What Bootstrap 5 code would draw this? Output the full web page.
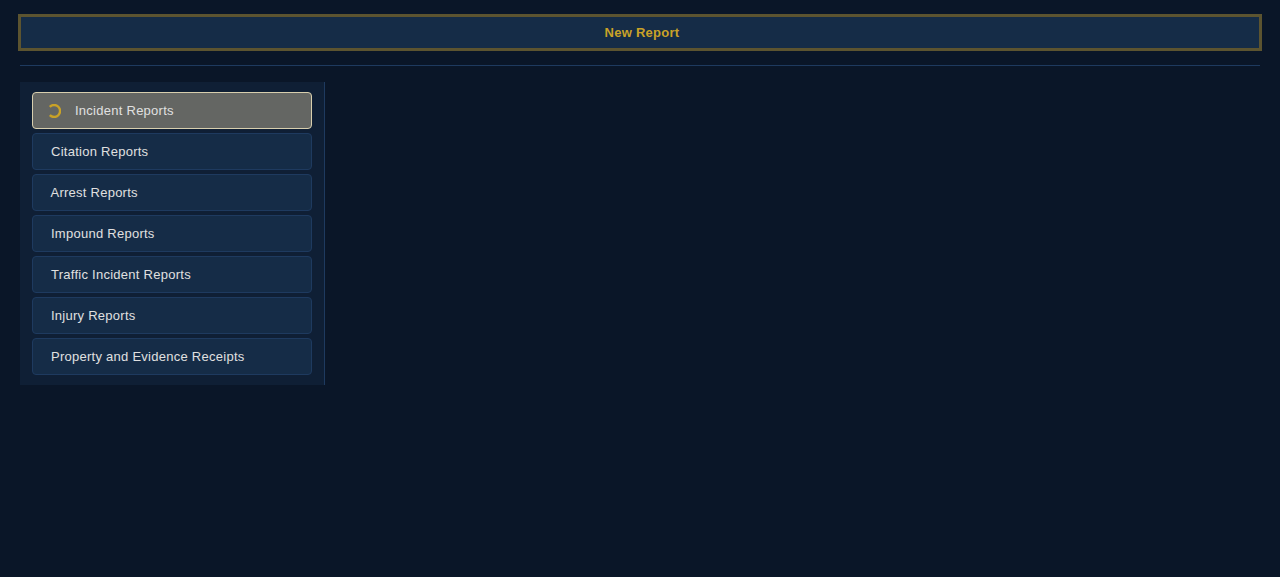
<!DOCTYPE html>
<html lang="en">
<head>
<meta charset="utf-8">
<title>New Report</title>
<link rel="stylesheet" href="https://cdn.jsdelivr.net/npm/bootstrap@5.3.0/dist/css/bootstrap.min.css">
<style>
html, body { height: 100%; }
body { background: #0a1628; font-family: "Liberation Sans", Arial, sans-serif; font-size: 13px; color: #e0e0e0; }
.page-wrap { padding: 16px 20px; }
.report-head { height: 33px; padding-left: 4px; background: #152c47; border: 1px solid #5c5430; outline: 2px solid #5c5430; color: #c9a227; font-weight: 700; letter-spacing: .26px; }
.head-rule { height: 1px; background: #1e3a5f; margin: 16px 0; }
.side-panel { width: 305px; background: #0f1f35; border-right: 1px solid #1e3a5f; padding: 10px 12px; gap: 4px; }
.side-btn { height: 37px; padding: 0 0 0 18px; background: #152c47; border: 1px solid #1e3a5f; border-radius: 4px; color: #e0e0e0; font-size: 13px; letter-spacing: .26px; text-align: left; }
.side-btn.is-loading { background: #646663; border-color: #d8cfae; padding-left: 14px; gap: 14px; }
.side-btn.is-shifted { padding-left: 17.5px; letter-spacing: .25px; }
.load-ring { width: 14px; height: 14px; flex: none; }
</style>
</head>
<body>
<div class="page-wrap">
  <div class="report-head d-flex align-items-center justify-content-center">New Report</div>
  <div class="head-rule"></div>
  <div class="side-panel d-flex flex-column">
    <button type="button" class="side-btn is-loading d-flex align-items-center">
      <svg class="load-ring" viewBox="0 0 14 14" fill="none" stroke="#c9a227" stroke-width="2.4"><path d="M2.8 2.8A6 6 0 1 1 2.8 11.2"/></svg>
      <span>Incident Reports</span>
    </button>
    <button type="button" class="side-btn">Citation Reports</button>
    <button type="button" class="side-btn is-shifted">Arrest Reports</button>
    <button type="button" class="side-btn">Impound Reports</button>
    <button type="button" class="side-btn">Traffic Incident Reports</button>
    <button type="button" class="side-btn">Injury Reports</button>
    <button type="button" class="side-btn">Property and Evidence Receipts</button>
  </div>
</div>
<script src="https://cdn.jsdelivr.net/npm/bootstrap@5.3.0/dist/js/bootstrap.bundle.min.js"></script>
</body>
</html>
